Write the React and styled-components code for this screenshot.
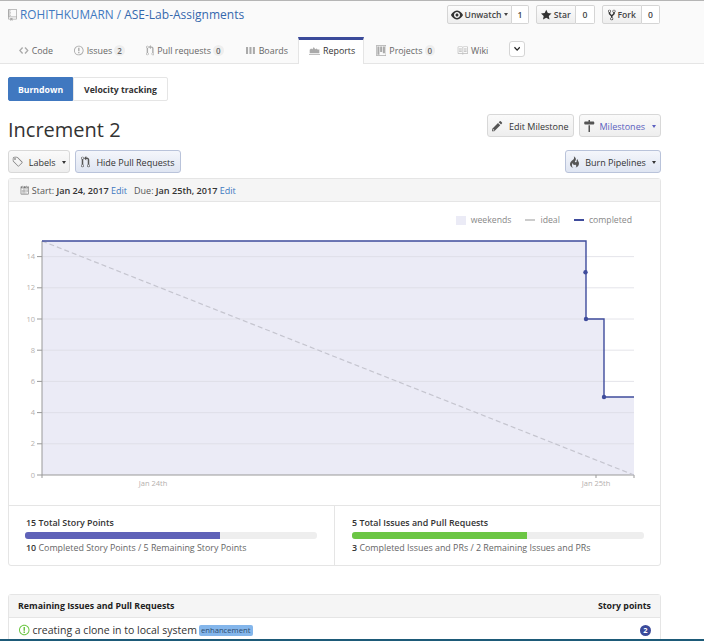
import React from 'react';
import styled, { createGlobalStyle } from 'styled-components';

const Global = createGlobalStyle`
  html, body { margin: 0; padding: 0; background: #fff; }
  body { font-family: "Open Sans", "Noto Sans", sans-serif; color: #333; }
`;

const Page = styled.div`
  height: 641px;
  overflow: hidden;
  display: flex;
  flex-direction: column;
  border-top: 1px solid #b5b5b5;
  box-sizing: border-box;
`;
const Scroll = styled.div`flex: 1; min-height: 0; overflow: hidden;`;
const Taskbar = styled.div`height: 2px; background: #1d5a78; flex: none;`;

const IconSvg = styled.svg`
  display: block;
  flex: none;
  fill: currentColor;
  fill-rule: evenodd;
  color: ${(p) => p.$c || 'inherit'};
`;

// old style octicon paths, all drawn on a 16 high box
const paths = {
  repo: [12, 'M4 9H3V8h1v1zm0-3H3v1h1V6zm0-2H3v1h1V4zm0-2H3v1h1V2zm8-1v12c0 .55-.45 1-1 1H6v2l-1.5-1.5L3 16v-2H1c-.55 0-1-.45-1-1V1c0-.55.45-1 1-1h10c.55 0 1 .45 1 1zm-1 10H1v2h2v-1h3v1h5v-2zm0-10H2v9h9V1z'],
  code: [14, 'M9.5 3L8 4.5 11.5 8 8 11.5 9.5 13 14 8 9.5 3zm-5 0L0 8l4.5 5L6 11.5 2.5 8 6 4.5 4.5 3z'],
  issue: [14, 'M7 2.3c3.14 0 5.7 2.56 5.7 5.7s-2.56 5.7-5.7 5.7A5.71 5.71 0 0 1 1.3 8c0-3.14 2.56-5.7 5.7-5.7zM7 1C3.14 1 0 4.14 0 8s3.14 7 7 7 7-3.14 7-7-3.14-7-7-7zm1 3H6v5h2V4zm0 6H6v2h2v-2z'],
  pr: [12, 'M11 11.28V5c-.03-.78-.34-1.47-.94-2.06C9.46 2.35 8.78 2.03 8 2H7V0L4 3l3 3V4h1c.27.02.48.11.69.31.21.2.3.42.31.69v6.28A1.993 1.993 0 0 0 10 15a1.993 1.993 0 0 0 1-3.72zm-1 2.92c-.66 0-1.2-.55-1.2-1.2 0-.65.55-1.2 1.2-1.2.65 0 1.2.55 1.2 1.2 0 .65-.55 1.2-1.2 1.2zM4 3c0-1.11-.89-2-2-2a1.993 1.993 0 0 0-1 3.72v6.56A1.993 1.993 0 0 0 2 15a1.993 1.993 0 0 0 1-3.72V4.72c.59-.34 1-.98 1-1.72zm-.8 10c0 .66-.55 1.2-1.2 1.2-.65 0-1.2-.55-1.2-1.2 0-.65.55-1.2 1.2-1.2.65 0 1.2.55 1.2 1.2zM2 4.2C1.34 4.2.8 3.65.8 3c0-.65.55-1.2 1.2-1.2.65 0 1.2.55 1.2 1.2 0 .65-.55 1.2-1.2 1.2z'],
  boards: [14, 'M0 3h3v10H0zM5 3h3v10H5zM10 3h3v10h-3z'],
  reports: [16, 'M0 13h16v1H0zM1 12V7l2-2 2 1 2-3 2 3 2-1 2 2 2-1v6z'],
  project: [15, 'M10 12h3V2h-3v10zm-4-2h3V2H6v8zm-4 4h3V2H2v12zm-1 1h13V1H1v14zM14 0H1a1 1 0 0 0-1 1v14a1 1 0 0 0 1 1h13a1 1 0 0 0 1-1V1a1 1 0 0 0-1-1z'],
  book: [16, 'M3 5h4v1H3V5zm0 3h4V7H3v1zm0 2h4V9H3v1zm11-5h-4v1h4V5zm0 2h-4v1h4V7zm0 2h-4v1h4V9zm2-6v9c0 .55-.45 1-1 1H9.5l-1 1-1-1H2c-.55 0-1-.45-1-1V3c0-.55.45-1 1-1h5.5l1 1 1-1H15c.55 0 1 .45 1 1zm-8 .5L7.5 3H2v9h6V3.5zm7-.5H9.5l-.5.5V12h6V3z'],
  eye: [16, 'M8.06 2C3 2 0 8 0 8s3 6 8.06 6C13 14 16 8 16 8s-3-6-7.94-6zM8 12c-2.2 0-4-1.78-4-4 0-2.2 1.8-4 4-4 2.22 0 4 1.8 4 4 0 2.22-1.78 4-4 4zm2-4c0 1.11-.89 2-2 2-1.11 0-2-.89-2-2 0-1.11.89-2 2-2 1.11 0 2 .89 2 2z'],
  star: [14, 'M14 6l-4.9-.64L7 1 4.9 5.36 0 6l3.6 3.26L2.67 14 7 11.67 11.33 14l-.93-4.74L14 6z'],
  fork: [10, 'M8 1a1.993 1.993 0 0 0-1 3.72V6L5 8 3 6V4.72A1.993 1.993 0 0 0 2 1a1.993 1.993 0 0 0-1 3.72V6.5l3 3v1.78A1.993 1.993 0 0 0 5 15a1.993 1.993 0 0 0 1-3.72V9.5l3-3V4.72A1.993 1.993 0 0 0 8 1zM2 4.2C1.34 4.2.8 3.65.8 3c0-.65.55-1.2 1.2-1.2.65 0 1.2.55 1.2 1.2 0 .65-.55 1.2-1.2 1.2zm3 10c-.66 0-1.2-.55-1.2-1.2 0-.65.55-1.2 1.2-1.2.65 0 1.2.55 1.2 1.2 0 .65-.55 1.2-1.2 1.2zm3-10c-.66 0-1.2-.55-1.2-1.2 0-.65.55-1.2 1.2-1.2.65 0 1.2.55 1.2 1.2 0 .65-.55 1.2-1.2 1.2z'],
  pencil: [14, 'M0 12v3h3l8-8-3-3-8 8zm3 2H1v-2h1v1h1v1zm10.3-9.3L12 6 9 3l1.3-1.3a.996.996 0 0 1 1.41 0l1.59 1.59c.39.39.39 1.02 0 1.41z'],
  milestone: [14, 'M6 0h2v2h5l1 2-1 2H1L0 4l1-2h5zM6 7h2v9H6z'],
  tag: [14, 'M7.73 1.73C7.26 1.26 6.62 1 5.96 1H3.5C2.13 1 1 2.13 1 3.5v2.47c0 .66.27 1.3.73 1.77l6.06 6.06c.39.39 1.02.39 1.41 0l4.59-4.59a.996.996 0 0 0 0-1.41L7.73 1.73zM2.38 7.09c-.31-.3-.47-.7-.47-1.13V3.5c0-.88.72-1.59 1.59-1.59h2.47c.42 0 .83.16 1.13.47l6.14 6.13-4.73 4.73-6.13-6.15zM3.01 3h2v2H3V3h.01z'],
  flame: [12, 'M5.05.31c.81 2.17.41 3.38-.52 4.31C3.55 5.67 1.98 6.45.9 7.98c-1.45 2.05-1.7 6.53 3.53 7.7-2.2-1.16-2.67-4.52-.3-6.61-.61 2.03.53 3.33 1.94 2.86 1.39-.47 2.3.53 2.27 1.67-.02.78-.31 1.44-1.13 1.81 3.42-.59 4.78-3.42 4.78-5.56 0-2.84-2.53-3.22-1.25-5.61-1.52.13-2.03 1.13-1.89 2.75.09 1.08-1.02 1.8-1.86 1.33-.67-.41-.66-1.19-.06-1.78C8.18 5.31 8.68 2.45 5.05.32L5.03.3l.02.01z'],
  calendar: [14, 'M13 2h-1v1.5c0 .28-.22.5-.5.5h-2c-.28 0-.5-.22-.5-.5V2H6v1.5c0 .28-.22.5-.5.5h-2c-.28 0-.5-.22-.5-.5V2H2c-.55 0-1 .45-1 1v11c0 .55.45 1 1 1h11c.55 0 1-.45 1-1V3c0-.55-.45-1-1-1zm0 12H2V5h11v9zM5 3H4V1h1v2zm6 0h-1V1h1v2zM6 7H5V6h1v1zm2 0H7V6h1v1zm2 0H9V6h1v1zm2 0h-1V6h1v1zM4 9H3V8h1v1zm2 0H5V8h1v1zm2 0H7V8h1v1zm2 0H9V8h1v1zm2 0h-1V8h1v1zm-8 2H3v-1h1v1zm2 0H5v-1h1v1zm2 0H7v-1h1v1zm2 0H9v-1h1v1zm2 0h-1v-1h1v1zm-8 2H3v-1h1v1zm2 0H5v-1h1v1zm2 0H7v-1h1v1zm2 0H9v-1h1v1z'],
  chevron: [10, 'M5 11L0 6l1.5-1.5L5 8.25 8.5 4.5 10 6l-5 5z'],
};

const Octicon = ({ name, h = 12, c }) => {
  const [w, d] = paths[name];
  return (
    <IconSvg viewBox={`0 0 ${w} 16`} width={(w * h) / 16} height={h} $c={c}>
      <path d={d} />
    </IconSvg>
  );
};

const Head = styled.header`
  height: 62px;
  background: #fafafa;
  border-bottom: 1px solid #e5e5e5;
`;
const TopRow = styled.div`
  display: flex;
  justify-content: space-between;
  align-items: flex-start;
  padding: 4px 44px 0 8px;
  height: 32px;
`;
const RepoTitle = styled.h1`
  margin: 0;
  font-size: 11.8px;
  font-weight: 400;
  line-height: 18px;
  color: #4078c0;
  display: flex;
  align-items: center;
  gap: 3px;
  span { white-space: pre; }
  strong { font-weight: 400; font-size: 12px; color: #3568ad; }
`;
const Actions = styled.div`display: flex; gap: 7px;`;
const Pair = styled.div`display: flex; height: 19px;`;
const ActionBtn = styled.div`
  display: flex;
  align-items: center;
  justify-content: center;
  gap: 2px;
  width: ${(p) => p.$w}px;
  box-sizing: border-box;
  font-size: 8.6px;
  font-weight: 600;
  color: #444;
  background: linear-gradient(#fcfcfc, #eee);
  border: 1px solid #d5d5d5;
  border-radius: 2px 0 0 2px;
`;
const Count = styled.div`
  width: ${(p) => p.$w}px;
  box-sizing: border-box;
  display: flex;
  align-items: center;
  justify-content: center;
  font-size: 8.6px;
  font-weight: 600;
  color: #444;
  background: #fff;
  border: 1px solid #d5d5d5;
  border-left: 0;
  border-radius: 0 2px 2px 0;
`;
const Caret = styled.i`
  display: inline-block;
  flex: none;
  width: 0;
  height: 0;
  margin-left: ${(p) => p.$ml || 0}px;
  border-left: 2.5px solid transparent;
  border-right: 2.5px solid transparent;
  border-top: 3px solid currentColor;
`;
const TabBar = styled.nav`
  display: flex;
  align-items: flex-end;
  height: 26px;
  padding-left: 7px;
`;
const Tab = styled.div`
  display: flex;
  align-items: center;
  gap: 3px;
  box-sizing: border-box;
  width: ${(p) => p.$w}px;
  padding-left: ${(p) => (p.$active ? 10 : 12)}px;
  padding-bottom: ${(p) => (p.$active ? 3 : 0)}px;
  font-size: 8.9px;
  color: ${(p) => (p.$active ? '#333' : '#666')};
  background: ${(p) => (p.$active ? '#fff' : 'transparent')};
  border: ${(p) => (p.$active ? '1px solid #e5e5e5' : '0')};
  border-top: ${(p) => (p.$active ? '3px solid #3b4a9a' : '0')};
  border-bottom: 0;
  margin-bottom: ${(p) => (p.$active ? '-1px' : '0')};
  height: ${(p) => (p.$active ? 27 : 26)}px;
`;
const TabCount = styled.span`
  margin-left: -1px;
  font-size: 8px;
  font-weight: 600;
  color: #666;
  background: #eee;
  border-radius: 6px;
  padding: 0 3px;
  line-height: 11px;
`;
const MoreBtn = styled.div`
  width: 16px;
  height: 16px;
  box-sizing: border-box;
  margin: 0 0 6px 0;
  border: 1px solid #d5d5d5;
  border-radius: 3px;
  background: #fff;
  display: flex;
  align-items: center;
  justify-content: center;
  color: #222;
`;

const Main = styled.main`
  width: 653px;
  margin-left: 8px;
`;
const Switch = styled.div`
  display: flex;
  margin-top: 13px;
  height: 24px;
`;
const SwitchItem = styled.div`
  width: ${(p) => p.$w}px;
  box-sizing: border-box;
  display: flex;
  align-items: center;
  justify-content: center;
  padding-top: 1px;
  font-size: 8.7px;
  font-weight: 700;
  color: ${(p) => (p.$on ? '#fff' : '#333')};
  background: ${(p) => (p.$on ? '#4078c0' : '#fff')};
  border: 1px solid ${(p) => (p.$on ? '#4078c0' : '#e5e5e5')};
  border-radius: ${(p) => (p.$on ? '2px 0 0 2px' : '0 2px 2px 0')};
`;
const TitleRow = styled.div`
  display: flex;
  justify-content: space-between;
  align-items: center;
  margin-top: 13px;
  height: 23px;
`;
const Title = styled.h2`
  margin: 0;
  font-size: 20px;
  font-weight: 400;
  line-height: 30px;
  color: #333;
  position: relative;
  top: 4px;
`;
const Group = styled.div`display: flex; gap: 5px;`;
const Btn = styled.div`
  display: flex;
  align-items: center;
  justify-content: center;
  gap: ${(p) => p.$gap || 5}px;
  width: ${(p) => p.$w}px;
  height: 23px;
  box-sizing: border-box;
  padding-top: 1px;
  font-size: 9px;
  font-weight: 400;
  color: ${(p) => p.$color || '#333'};
  background: ${(p) => (p.$blue ? 'linear-gradient(#f4f6fb, #dfe5f2)' : 'linear-gradient(#fafafa, #eee)')};
  border: 1px solid ${(p) => (p.$blue ? '#b9c3da' : '#d8d8d8')};
  border-radius: 3px;
`;
const ToolRow = styled(TitleRow)`margin-top: 13px;`;

const Card = styled.section`
  margin-top: 5px;
  border: 1px solid #e5e5e5;
  border-radius: 3px;
  background: #fff;
`;
const CardHead = styled.div`
  height: 23px;
  box-sizing: border-box;
  padding: 0 10px 0 11px;
  display: flex;
  align-items: center;
  background: #f5f5f5;
  border-bottom: 1px solid #e5e5e5;
  font-size: 9px;
  color: #555;
`;
const DateLine = styled.div`
  margin-left: 3px;
  white-space: pre;
  b { color: #333; font-weight: 600; font-size: 9.1px; }
  a { color: #4078c0; }
`;
const ChartArea = styled.div`
  height: 303px;
  position: relative;
`;
const Legend = styled.div`
  display: flex;
  justify-content: flex-end;
  align-items: center;
  height: 36px;
  padding-right: 28px;
  font-size: 8.7px;
  color: #888;
`;
const LegendItem = styled.div`
  display: flex;
  align-items: center;
  gap: 5px;
  margin-left: 14px;
`;
const Swatch = styled.i`
  display: block;
  width: 10px;
  height: ${(p) => p.$h}px;
  background: ${(p) => p.$c};
`;
const ChartSvg = styled.svg`
  display: block;
  position: absolute;
  left: 0;
  top: 0;
  pointer-events: none;
  text { font-family: "Open Sans", sans-serif; font-size: 7.5px; fill: #b5b0ae; }
`;
const Stats = styled.div`
  display: grid;
  grid-template-columns: 326px 1fr;
  height: 60px;
  box-sizing: border-box;
  border-top: 1px solid #e5e5e5;
`;
const Stat = styled.div`
  box-sizing: border-box;
  padding: ${(p) => (p.$div ? '10px 17px 0 16px' : '10px 16px 0 17px')};
  ${(p) => p.$div && 'border-right: 1px solid #e5e5e5;'}
  font-size: 8.9px;
  color: #666;
  b { color: #333; font-weight: 600; }
`;
const StatTitle = styled.div`
  font-weight: 600;
  color: #333;
  line-height: 13px;
  margin-left: ${(p) => p.$ml || 0}px;
`;
const Track = styled.div`
  height: 7px;
  margin-top: 3px;
  background: #eee;
  border-radius: 3px;
  overflow: hidden;
`;
const Fill = styled.div`
  height: 100%;
  background: ${(p) => p.$c};
`;
const StatFoot = styled.div`
  margin: 2px 0 0 ${(p) => p.$ml || 0}px;
  line-height: 13px;
`;
const ListCard = styled(Card)`margin-top: 28px;`;
const ListHead = styled(CardHead)`
  justify-content: space-between;
  padding: 0 9px;
  font-weight: 700;
  font-size: 8.8px;
  color: #222;
`;
const IssueRow = styled.div`
  display: flex;
  align-items: center;
  height: 24px;
  padding: 0 9px 0 10px;
  font-size: 10.5px;
  color: #333;
  white-space: pre;
`;
const IssueName = styled.span`margin-left: 3px;`;
const IssueLabel = styled.span`
  margin-left: 2px;
  font-size: 7.7px;
  line-height: 11px;
  padding: 0 2px;
  color: #2c4a6e;
  background: #84b6eb;
  border-radius: 2px;
`;
const Points = styled.span`
  margin-left: auto;
  width: 11px;
  height: 11px;
  border-radius: 50%;
  background: #3b4a9a;
  color: #fff;
  font-size: 7.5px;
  font-weight: 700;
  display: flex;
  align-items: center;
  justify-content: center;
`;

// y position for a story point value on the chart
const py = (v) => 241 + ((15 - v) * 234) / 15 - 202;
const ticks = [14, 12, 10, 8, 6, 4, 2, 0];

function Chart() {
  const step = `M42 ${py(15)}H586V${py(10)}H604V${py(5)}H634`;
  return (
    <ChartSvg width="651" height="303" viewBox="9 0 651 303" role="img">
      <path d={`${step}V${py(0)}H42Z`} fill="#ebebf6" />
      {ticks.slice(0, -1).map((t) => (
        <line key={t} x1="42" x2="634" y1={py(t)} y2={py(t)} stroke="#dcdce4" strokeWidth="1" opacity="0.75" />
      ))}
      {ticks.map((t) => (
        <g key={t}>
          <line x1="37" x2="42" y1={py(t)} y2={py(t)} stroke="#999" />
          <text x="35" y={py(t) + 2.5} textAnchor="end">{t}</text>
        </g>
      ))}
      <path d={`M42 ${py(15)}V${py(0)}H634`} fill="none" stroke="#999" />
      <path d={`M42 ${py(0)}v3M596 ${py(0)}v3M634 ${py(0)}v3`} stroke="#999" fill="none" />
      <line x1="42" y1={py(15)} x2="634" y2={py(0)} stroke="#c5c5cf" strokeWidth="1.2" strokeDasharray="5 3" />
      <path d={step} fill="none" stroke="#3f4c9c" strokeWidth="1.4" />
      <circle cx="585.5" cy={py(13)} r="2.2" fill="#3f4c9c" />
      <circle cx="586" cy={py(10)} r="2.2" fill="#3f4c9c" />
      <circle cx="604" cy={py(5)} r="2.2" fill="#3f4c9c" />
      <text x="153" y={py(0) + 11} textAnchor="middle">Jan 24th</text>
      <text x="596" y={py(0) + 11} textAnchor="middle">Jan 25th</text>
    </ChartSvg>
  );
}

export default function App() {
  return (
    <>
      <Global />
      <Page>
        <Scroll>
          <Head>
            <TopRow>
              <RepoTitle>
                <Octicon name="repo" h={12} c="#aaa" />
                <span>ROHITHKUMARN / <strong>ASE-Lab-Assignments</strong></span>
              </RepoTitle>
              <Actions>
                <Pair>
                  <ActionBtn $w={65}><Octicon name="eye" h={12} c="#333" />Unwatch<Caret $ml={1} /></ActionBtn>
                  <Count $w={17}>1</Count>
                </Pair>
                <Pair>
                  <ActionBtn $w={40}><Octicon name="star" h={12} c="#333" />Star</ActionBtn>
                  <Count $w={19}>0</Count>
                </Pair>
                <Pair>
                  <ActionBtn $w={40}><Octicon name="fork" h={12} c="#333" />Fork</ActionBtn>
                  <Count $w={18}>0</Count>
                </Pair>
              </Actions>
            </TopRow>
            <TabBar>
              <Tab $w={55}><Octicon name="code" h={11} c="#aaa" />Code</Tab>
              <Tab $w={72}><Octicon name="issue" h={11} c="#aaa" />Issues <TabCount>2</TabCount></Tab>
              <Tab $w={100}><Octicon name="pr" h={11} c="#aaa" />Pull requests <TabCount>0</TabCount></Tab>
              <Tab $w={64}><Octicon name="boards" h={11} c="#aaa" />Boards</Tab>
              <Tab $w={66} $active><Octicon name="reports" h={11} c="#aaa" />Reports</Tab>
              <Tab $w={81}><Octicon name="project" h={11} c="#aaa" />Projects <TabCount>0</TabCount></Tab>
              <Tab $w={64}><Octicon name="book" h={11} c="#bbb" />Wiki</Tab>
              <MoreBtn><Octicon name="chevron" h={10} /></MoreBtn>
            </TabBar>
          </Head>
          <Main>
            <Switch>
              <SwitchItem $w={65} $on>Burndown</SwitchItem>
              <SwitchItem $w={95}>Velocity tracking</SwitchItem>
            </Switch>
            <TitleRow>
              <Title>Increment 2</Title>
              <Group>
                <Btn $w={87} $gap={6}><Octicon name="pencil" h={12} c="#555" />Edit Milestone</Btn>
                <Btn $w={82} $color="#5b5fc0" $gap={5}><Octicon name="milestone" h={12} c="#555" />Milestones<Caret $ml={2} /></Btn>
              </Group>
            </TitleRow>
            <ToolRow>
              <Group>
                <Btn $w={62} $gap={6}><Octicon name="tag" h={12} c="#777" />Labels<Caret /></Btn>
                <Btn $w={106} $gap={6} $blue><Octicon name="pr" h={12} c="#555" />Hide Pull Requests</Btn>
              </Group>
              <Btn $w={96} $blue $gap={6}><Octicon name="flame" h={12} c="#555" />Burn Pipelines<Caret /></Btn>
            </ToolRow>
            <Card>
              <CardHead>
                <Octicon name="calendar" h={10} c="#777" />
                <DateLine>
                  Start: <b>Jan 24, 2017</b> <a>Edit</a>{'   '}Due: <b>Jan 25th, 2017</b> <a>Edit</a>
                </DateLine>
              </CardHead>
              <ChartArea>
                <Chart />
                <Legend>
                  <LegendItem><Swatch $h={9} $c="#ebebf6" />weekends</LegendItem>
                  <LegendItem><Swatch $h={2} $c="#ccc" />ideal</LegendItem>
                  <LegendItem><Swatch $h={2} $c="#3f4c9c" />completed</LegendItem>
                </Legend>
              </ChartArea>
              <Stats>
                <Stat $div>
                  <StatTitle $ml={1}>15 Total Story Points</StatTitle>
                  <Track><Fill $c="#5f62b8" style={{ width: `${(10 / 15) * 100}%` }} /></Track>
                  <StatFoot $ml={1}><b>10</b> Completed Story Points / 5 Remaining Story Points</StatFoot>
                </Stat>
                <Stat>
                  <StatTitle>5 Total Issues and Pull Requests</StatTitle>
                  <Track><Fill $c="#6cc644" style={{ width: `${(3 / 5) * 100}%` }} /></Track>
                  <StatFoot><b>3</b> Completed Issues and PRs / 2 Remaining Issues and PRs</StatFoot>
                </Stat>
              </Stats>
            </Card>
            <ListCard>
              <ListHead>
                <span>Remaining Issues and Pull Requests</span>
                <span>Story points</span>
              </ListHead>
              <IssueRow>
                <Octicon name="issue" h={12} c="#6cc644" />
                <IssueName>creating a clone in to local system</IssueName>
                <IssueLabel>enhancement</IssueLabel>
                <Points>2</Points>
              </IssueRow>
            </ListCard>
          </Main>
        </Scroll>
        <Taskbar />
      </Page>
    </>
  );
}
